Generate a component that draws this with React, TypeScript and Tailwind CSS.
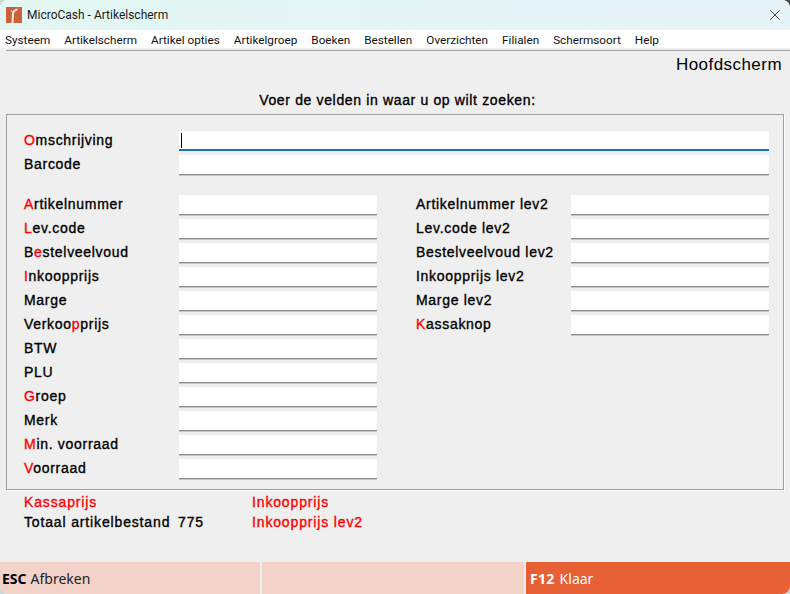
import { X } from "lucide-react";

const menuItems = ["Systeem", "Artikelscherm", "Artikel opties", "Artikelgroep", "Boeken", "Bestellen", "Overzichten", "Filialen", "Schermsoort", "Help"];

// pre = text before the red hotkey letter, hot = red letter, post = rest
const leftFields = [
  { pre: "", hot: "A", post: "rtikelnummer" },
  { pre: "", hot: "L", post: "ev.code" },
  { pre: "B", hot: "e", post: "stelveelvoud" },
  { pre: "", hot: "I", post: "nkoopprijs" },
  { pre: "Marge", hot: "", post: "" },
  { pre: "Verkoo", hot: "p", post: "prijs" },
  { pre: "BTW", hot: "", post: "" },
  { pre: "PLU", hot: "", post: "" },
  { pre: "", hot: "G", post: "roep" },
  { pre: "Merk", hot: "", post: "" },
  { pre: "", hot: "M", post: "in. voorraad" },
  { pre: "", hot: "V", post: "oorraad" },
];

const rightFields = [
  { pre: "Artikelnummer lev2", hot: "", post: "" },
  { pre: "Lev.code lev2", hot: "", post: "" },
  { pre: "Bestelveelvoud lev2", hot: "", post: "" },
  { pre: "Inkoopprijs lev2", hot: "", post: "" },
  { pre: "Marge lev2", hot: "", post: "" },
  { pre: "", hot: "K", post: "assaknop" },
];

type FieldProps = { pre: string; hot: string; post: string };

const Label = ({ pre, hot, post }: FieldProps) => (
  <span className="-mt-[3px] text-[14px] leading-[20px] tracking-[0.7px] [-webkit-text-stroke:0.35px] text-black">
    {pre}
    <span className="text-[#ff0000]">{hot}</span>
    {post}
  </span>
);

const FieldInput = ({ focused = false }: { focused?: boolean }) => (
  <div
    className={
      focused
        ? "relative h-[20px] bg-white border-b-2 border-[#1a6fc0]"
        : "h-[20px] bg-white border-b border-[#8a8a8a] shadow-[0_1px_0_#c8c8c8]"
    }
  >
    {focused && <div className="absolute left-[2px] top-[2px] h-[15px] w-px bg-black" />}
  </div>
);

const App = () => {
  return (
    <div className="w-[790px] h-[594px] bg-gradient-to-tr from-[#cfd6da] via-[#cfd6da] via-85% to-[#4a4a4a]">
      <div className="w-full h-full flex flex-col overflow-hidden rounded-lg bg-[#efefef] font-['Liberation_Sans',Arial,sans-serif]">
        {/* Title bar */}
        <div className="h-[30px] flex items-center bg-gradient-to-r from-[#e2f7f2] to-[#e6f3f8] pl-[6px] pr-[6px]">
          <svg width="16" height="16" viewBox="0 0 16 16" className="shrink-0">
            <rect width="16" height="16" fill="#c9623a" />
            <path d="M6.5 16 L7 7 Q7.2 3.6 11.5 2.4" stroke="#f6e8de" strokeWidth="2" fill="none" />
            <path d="M5 3.6 L7.4 5.6" stroke="#f6e8de" strokeWidth="1.2" fill="none" />
          </svg>
          <span className="ml-[5px] text-[12px] text-[#1a1a1a] font-['Roboto',sans-serif]">
            MicroCash - Artikelscherm
          </span>
          <X className="ml-auto w-[18px] h-[18px] text-[#222]" strokeWidth={1.1} />
        </div>

        {/* Menu */}
        <div className="h-[18px] flex items-center gap-[14px] pl-[5px] pt-[3px] bg-white text-[11.75px] text-[#111] font-['Roboto',sans-serif]">
          {menuItems.map((m) => (
            <span key={m}>{m}</span>
          ))}
        </div>
        <div className="h-[3px] ml-[6px] border-b border-[#a0a0a0]" />

        <div className="flex justify-end pr-[8px] h-[26px] text-[17px] leading-[28px] text-black tracking-[0.45px]">
          Hoofdscherm
        </div>

        <div className="h-[37px] pt-[13px] pl-[5px] text-center text-[14px] leading-[20px] tracking-[0.65px] [-webkit-text-stroke:0.35px] text-black">
          Voer de velden in waar u op wilt zoeken:
        </div>

        {/* Search panel */}
        <div className="mx-[6px] h-[376px] border border-[#a0a0a0] shadow-[1px_1px_0_#ffffff] pl-[17px] pr-[12px] pt-[16px]">
          <div className="flex flex-col gap-[4px]">
            <div className="grid grid-cols-[155px_590px] items-center">
              <Label pre="" hot="O" post="mschrijving" />
              <FieldInput focused />
            </div>
            <div className="grid grid-cols-[155px_590px] items-center">
              <Label pre="Barcode" hot="" post="" />
              <FieldInput />
            </div>
          </div>

          <div className="mt-[20px] flex">
            <div className="w-[392px] flex flex-col gap-[4px]">
              {leftFields.map((f) => (
                <div key={f.pre + f.hot + f.post} className="grid grid-cols-[155px_198px] items-center">
                  <Label pre={f.pre} hot={f.hot} post={f.post} />
                  <FieldInput />
                </div>
              ))}
            </div>
            <div className="flex flex-col gap-[4px]">
              {rightFields.map((f) => (
                <div key={f.pre + f.hot + f.post} className="grid grid-cols-[155px_198px] items-center">
                  <Label pre={f.pre} hot={f.hot} post={f.post} />
                  <FieldInput />
                </div>
              ))}
            </div>
          </div>
        </div>

        {/* Totals */}
        <div className="mt-[2px] pl-[24px] grid grid-cols-[228px_200px] text-[14px] leading-[20px] tracking-[0.85px] [-webkit-text-stroke:0.35px]">
          <span className="text-[#ff0000]">Kassaprijs</span>
          <span className="text-[#ff0000]">Inkoopprijs</span>
          <span className="text-black flex">
            <span className="w-[154px]">Totaal artikelbestand</span>
            <span>775</span>
          </span>
          <span className="text-[#ff0000]">Inkoopprijs lev2</span>
        </div>

        {/* Function keys */}
        <div className="mt-auto h-[32px] flex gap-[2px] text-[14px] font-['Noto_Sans',sans-serif]">
          <div className="w-[260px] flex items-center pl-[2px] bg-[#f3d3c9] text-[#222]">
            <b className="mr-[4px] text-black">ESC</b> Afbreken
          </div>
          <div className="w-[262px] bg-[#f3d3c9]" />
          <div className="flex-1 flex items-center pl-[4px] bg-[#e65f35] text-white">
            <b className="mr-[5px] tracking-[0.3px]">F12</b> Klaar
          </div>
        </div>
      </div>
    </div>
  );
};

export default App;
